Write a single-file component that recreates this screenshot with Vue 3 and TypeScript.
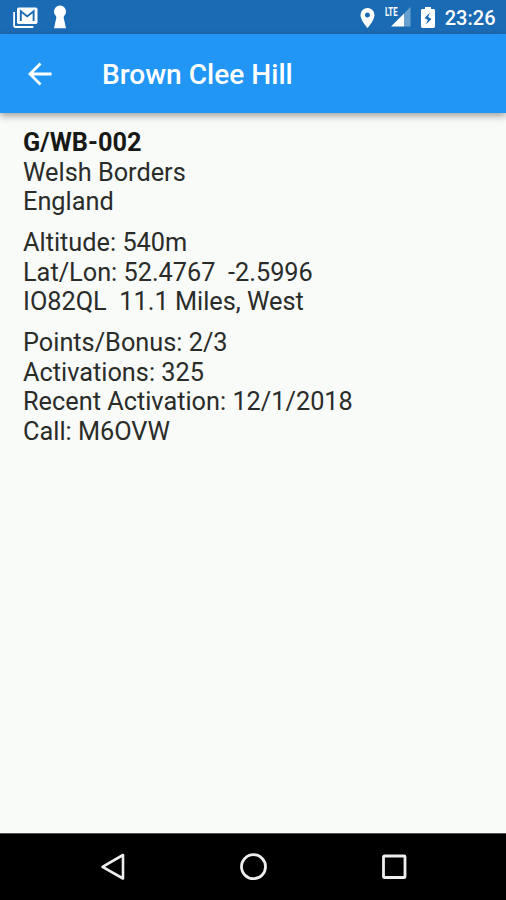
<script setup lang="ts">
interface Line { text: string; strong?: boolean }

const title = 'Brown Clee Hill'
const groups: Line[][] = [
  [{ text: 'G/WB-002', strong: true }, { text: 'Welsh Borders' }, { text: 'England' }],
  [{ text: 'Altitude: 540m' }, { text: 'Lat/Lon: 52.4767  -2.5996' }, { text: 'IO82QL  11.1 Miles, West' }],
  [{ text: 'Points/Bonus: 2/3' }, { text: 'Activations: 325' }, { text: 'Recent Activation: 12/1/2018' }, { text: 'Call: M6OVW' }],
]
</script>

<template>
  <div class="screen">
    <header class="status">
      <div class="side">
        <svg class="mail" width="26" height="22" viewBox="0 0 26 22">
          <path d="M1.1 5v13.4q0 1.6 1.6 1.6h17.6" fill="none" stroke="#fff" stroke-width="1.8" />
          <rect x="4" y="0.5" width="20.5" height="16.5" rx="1.8" fill="#fff" />
          <path d="M7.8 14V4.2l6.4 5.2 6.4-5.2V14" fill="none" stroke="#1b6bb4" stroke-width="1.9" />
        </svg>
        <svg class="keyhole" width="14" height="24" viewBox="0 0 14 24">
          <path d="M7 .5a6 6 0 0 1 4.500 9.900c-.8.9-.9 1.700-.7 2.800L13 23.2H1l2.200-10c.2-1.100.1-1.900-.7-2.800A6 6 0 0 1 7 .5z" fill="#fff" />
        </svg>
      </div>
      <div class="side">
        <svg class="pin" width="15" height="20" viewBox="0 0 14 20">
          <path fill="#fff" fill-rule="evenodd" d="M7 0a7 7 0 0 0-7 7c0 5.2 7 13 7 13s7-7.800 7-13a7 7 0 0 0-7-7zm0 9.500a2.500 2.500 0 1 1 0-5 2.500 2.500 0 0 1 0 5z" />
        </svg>
        <div class="signal">
          <svg class="bars" width="21" height="20" viewBox="0 0 21 20">
            <path d="M20.500 0v19.500H14V6.500z" fill="#68a0d0" />
            <path d="M14 6.500v13H1z" fill="#fff" />
          </svg>
          <span class="lte">LTE</span>
        </div>
        <svg class="battery" width="14" height="21" viewBox="0 0 14 21">
          <path fill="#fff" d="M4 0h6v2h2.600Q14 2 14 3.400v16.200q0 1.400-1.400 1.400H1.400Q0 21 0 19.600V3.400Q0 2 1.400 2H4z" />
          <path fill="#1b6bb4" d="M9 5.500 3.500 11l3.300 2L5 17.500l5.500-5.500-3.300-2z" />
        </svg>
        <time class="clock">23:26</time>
      </div>
    </header>

    <nav class="toolbar">
      <svg class="back" width="24" height="24" viewBox="0 0 24 24">
        <path d="M23.500 12H2M12.500 1.500 2 12l10.500 10.500" fill="none" stroke="#fff" stroke-width="2.800" />
      </svg>
      <h1>{{ title }}</h1>
    </nav>

    <main>
      <section v-for="(group, i) in groups" :key="i">
        <p v-for="line in group" :key="line.text" :class="{ strong: line.strong }">{{ line.text }}</p>
      </section>
    </main>

    <footer class="navbar">
      <svg width="28" height="30" viewBox="0 0 28 30">
        <path d="M24 3v23.500L3.500 14.800z" fill="none" stroke="#eee" stroke-width="2.600" stroke-linejoin="round" />
      </svg>
      <svg width="28" height="30" viewBox="0 0 28 30">
        <circle cx="13.500" cy="14.700" r="12" fill="none" stroke="#eee" stroke-width="2.800" />
      </svg>
      <svg width="28" height="30" viewBox="0 0 28 30">
        <rect x="3.500" y="4" width="21.500" height="21.500" rx="0.800" fill="none" stroke="#eee" stroke-width="2.800" />
      </svg>
    </footer>
  </div>
</template>

<style>
body { margin: 0; }
</style>

<style scoped>
.screen {
  display: flex;
  flex-direction: column;
  width: 506px;
  height: 900px;
  overflow: hidden;
  background: #f8fbf8;
  font-family: Roboto, sans-serif;
}
.status {
  display: flex;
  justify-content: space-between;
  box-sizing: border-box;
  height: 34px;
  padding: 0 10.500px 0 13px;
  background: #1b6bb4;
  color: #fff;
}
.side { display: flex; align-items: flex-start; }
.mail { margin-top: 7px; }
.keyhole { margin: 5px 0 0 13.500px; }
.pin { margin: 8px 10px 0 0; }
.signal { position: relative; width: 26px; height: 28px; }
.lte {
  position: absolute;
  left: 0;
  top: 5px;
  background: #1b6bb4;
  font-size: 12.500px;
  font-weight: 700;
  line-height: 13px;
  transform: scaleX(0.62);
  transform-origin: left;
}
.bars { position: absolute; right: 0; bottom: 1px; }
.battery { margin: 7px 9.500px 0 10px; }
.clock { font-size: 20px; font-weight: 500; line-height: 37px; }
.toolbar {
  display: flex;
  align-items: center;
  box-sizing: border-box;
  height: 79px;
  flex: none;
  padding: 0 28px;
  background: #2196f5;
  color: #fff;
  box-shadow: 0 3px 7px rgba(0, 0, 0, 0.36);
}
h1 {
  margin: 3px 0 0 50px;
  font-size: 28.100px;
  font-weight: 500;
  line-height: 32px;
  white-space: nowrap;
}
main { flex: 1; padding: 15.200px 23px 0; }
section { margin-bottom: 11.200px; }
p {
  margin: 0;
  color: #2a2c2a;
  font-size: 25.300px;
  font-weight: 400;
  line-height: 29.600px;
  white-space: pre;
}
.strong { color: #171917; font-weight: 700; }
.navbar {
  display: flex;
  justify-content: space-between;
  box-sizing: border-box;
  height: 67px;
  padding: 18px 98px 0 99px;
  background: #000;
  border-top: 1px solid #555;
}
</style>
